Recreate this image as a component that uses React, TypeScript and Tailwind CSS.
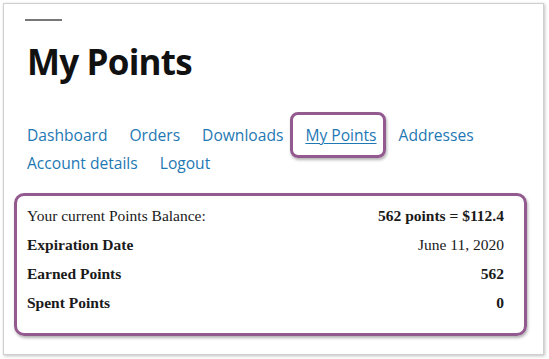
export default function App() {
  const links = ["Dashboard", "Orders", "Downloads", "My Points", "Addresses", "Account details", "Logout"]
  const rows = [
    { label: "Your current Points Balance:", value: "562 points = $112.4", labelBold: false, valueBold: true },
    { label: "Expiration Date", value: "June 11, 2020", labelBold: true, valueBold: false },
    { label: "Earned Points", value: "562", labelBold: true, valueBold: true },
    { label: "Spent Points", value: "0", labelBold: true, valueBold: true },
  ]

  return (
    <div className="w-[549px] h-[359px] bg-white overflow-hidden pt-[3px] pl-[3px]">
      <div className="w-[541px] h-[352px] border border-[#cfcfcf] shadow-[1px_1px_3px_rgba(0,0,0,0.25)] bg-white relative">
        {/* page content */}
        <div className="pl-[23px] pt-[15px]">
          <div className="w-[37px] h-[2px] bg-[#777] -ml-[2px]" />
          <h1 className="mt-[17px] text-[35px] leading-[48px] font-bold tracking-[-0.8px] text-[#111] font-['Open_Sans',sans-serif]">
            My Points
          </h1>
          <nav className="mt-[35px] flex flex-wrap w-[475px] gap-x-[22px] font-['Open_Sans',sans-serif] text-[15.6px] leading-[28px] text-[#1e78b4]">
            {links.map((l) => (
              <a
                key={l}
                href="#"
                className={l === "My Points" ? "underline underline-offset-2 decoration-1" : ""}
              >
                {l}
              </a>
            ))}
          </nav>
        </div>

        {/* highlight around the active link */}
        <div className="absolute left-[286px] top-[108px] w-[96px] h-[46px] rounded-[8px] border-[3px] border-[#935a8f] shadow-[1px_2px_3px_rgba(0,0,0,0.3)]" />

        {/* points balance */}
        <div className="mt-[16px] ml-[10px] w-[513px] h-[143px] rounded-[10px] border-[3px] border-[#935a8f] shadow-[1px_2px_3px_rgba(0,0,0,0.3)] pl-[10px] pr-[20px] pt-[5px] font-['Liberation_Serif',serif] text-[15.5px] text-[#1a1a1a]">
          {rows.map((r) => (
            <div key={r.label} className="flex justify-between h-[29px] items-center">
              <span className={r.labelBold ? "font-bold" : ""}>{r.label}</span>
              <span className={r.valueBold ? "font-bold" : ""}>{r.value}</span>
            </div>
          ))}
        </div>
      </div>
    </div>
  )
}
